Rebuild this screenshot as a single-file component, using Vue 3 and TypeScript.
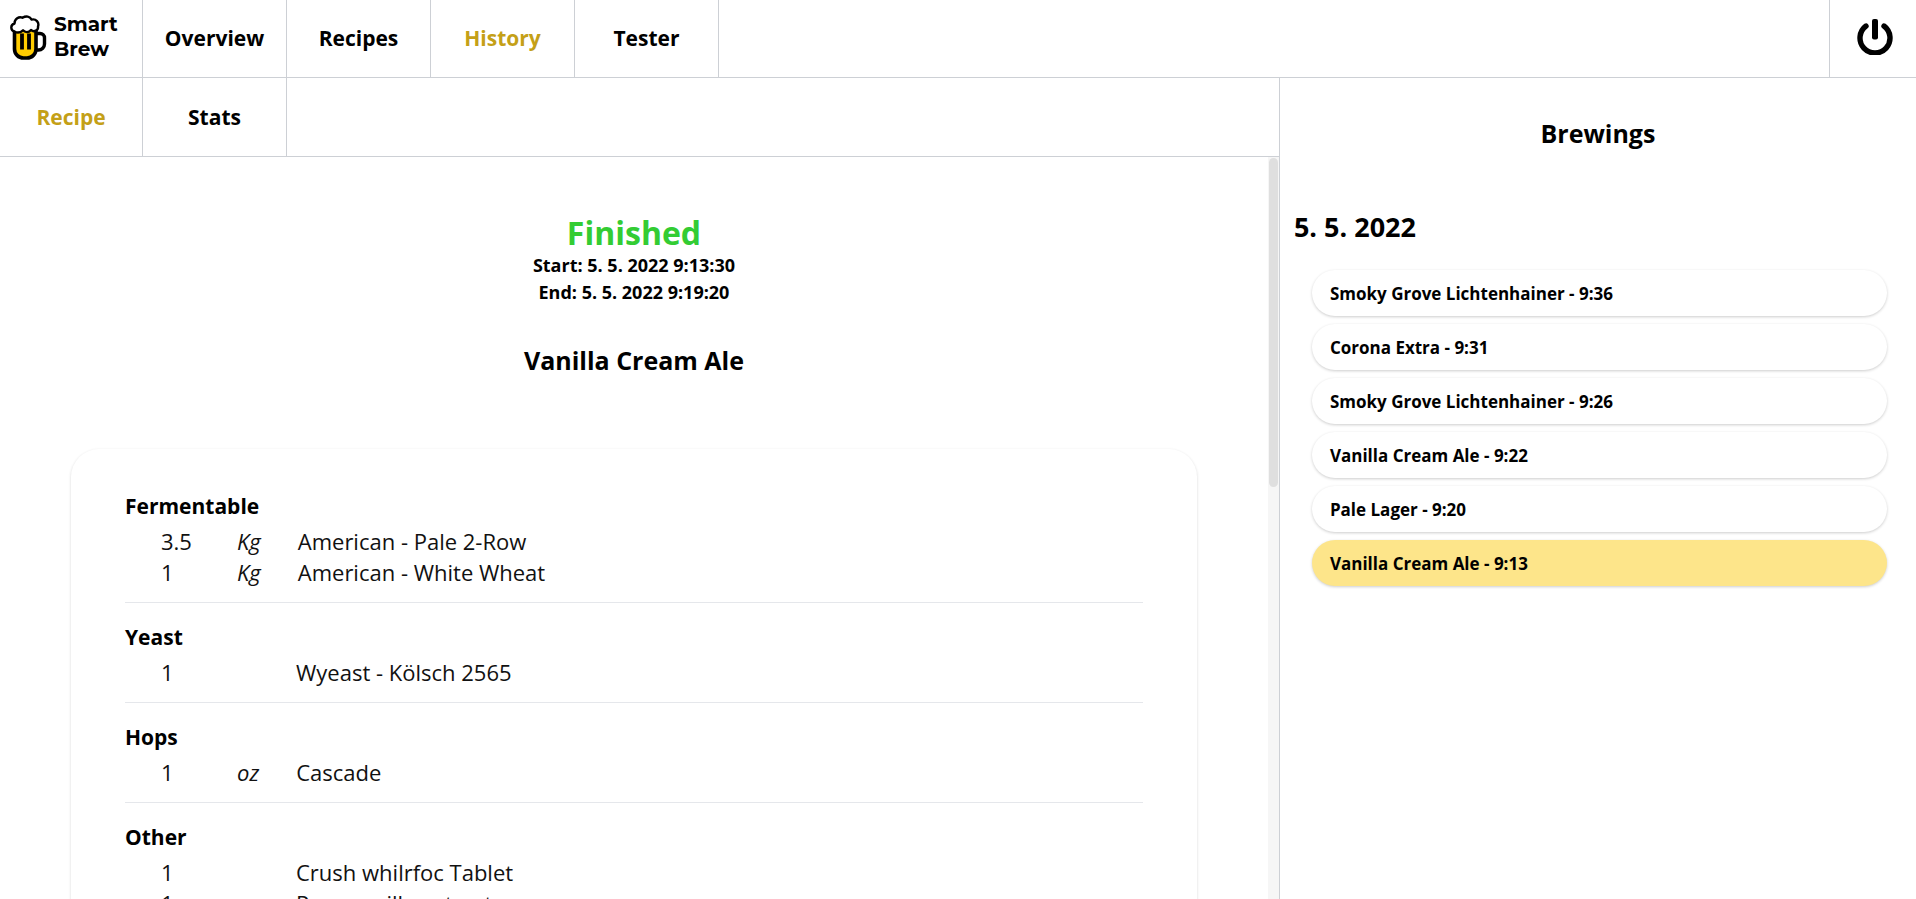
<script setup lang="ts">
import { computed, onMounted, ref } from 'vue'

interface Ingredient { amount: string; unit: string; name: string }
interface Section { title: string; items: Ingredient[] }

const tabs = ['Overview', 'Recipes', 'History', 'Tester']
const activeTab = ref('History')
const views = ['Recipe', 'Stats']
const activeView = ref('Recipe')

const sections: Section[] = [
  {
    title: 'Fermentable',
    items: [
      { amount: '3.5', unit: 'Kg', name: 'American - Pale 2-Row' },
      { amount: '1', unit: 'Kg', name: 'American - White Wheat' },
    ],
  },
  { title: 'Yeast', items: [{ amount: '1', unit: '', name: 'Wyeast - Kölsch 2565' }] },
  { title: 'Hops', items: [{ amount: '1', unit: 'oz', name: 'Cascade' }] },
  {
    title: 'Other',
    items: [
      { amount: '1', unit: '', name: 'Crush whilrfoc Tablet' },
      { amount: '1', unit: '', name: 'Pure vanilla extract' },
    ],
  },
]

const brewings = [
  'Smoky Grove Lichtenhainer - 9:36',
  'Corona Extra - 9:31',
  'Smoky Grove Lichtenhainer - 9:26',
  'Vanilla Cream Ale - 9:22',
  'Pale Lager - 9:20',
  'Vanilla Cream Ale - 9:13',
]
const selected = ref(5)

// Custom scrollbar: thumb size and offset follow the scroll container.
const scroller = ref<HTMLElement | null>(null)
const viewHeight = ref(1)
const fullHeight = ref(1)
const scrollTop = ref(0)
function measure(): void {
  const el = scroller.value
  if (!el) return
  viewHeight.value = el.clientHeight
  fullHeight.value = el.scrollHeight
  scrollTop.value = el.scrollTop
}
onMounted(() => {
  measure()
  window.addEventListener('resize', measure)
})
const thumbStyle = computed(() => ({
  height: `${(viewHeight.value / fullHeight.value) * 100}%`,
  marginTop: `${(scrollTop.value / fullHeight.value) * viewHeight.value}px`,
}))
</script>

<template>
  <div class="app">
    <header class="topbar">
      <a class="logo" href="#">
        <svg class="mug" viewBox="0 0 37 45" aria-hidden="true">
          <path d="M26 18.500h4a4.500 4.500 0 0 1 4.500 4.500v6a6 6 0 0 1-6 6h-3" fill="none" stroke="#000" stroke-width="3.400" />
          <path d="M4.500 14v20a9 9 0 0 0 9 9h3.500a9 9 0 0 0 9-9V14z" fill="#fc0" stroke="#000" stroke-width="3.600" />
          <path d="M12 18.500v16M19 18.500v16" stroke="#000" stroke-width="3.800" />
          <path d="M4.500 16.500C.5 15.500 0 10 4.500 8.500 4.500 4 9 1 12.500 2.800 16 .6 20 1.200 21.500 4.600 26 3.500 29.500 7.500 28 11.500 28.500 15.500 24 17.500 21 15 18.500 18 15 17.500 13 15.300 10 18 7 18 4.500 16.500z" fill="#fff" stroke="#000" stroke-width="2.400" stroke-linejoin="round" />
        </svg>
        <span>Smart<br />Brew</span>
      </a>
      <nav class="tabs">
        <button v-for="t in tabs" :key="t" class="tab" :class="{ active: t === activeTab }" @click="activeTab = t">{{ t }}</button>
      </nav>
      <button class="power" aria-label="Power">
        <svg viewBox="0 0 36 36" aria-hidden="true">
          <path d="M9 7a15 15 0 1 0 18 0" fill="none" stroke="#000" stroke-width="5.400" stroke-linecap="round" />
          <rect x="15" y="0" width="6" height="20.500" rx="2" />
        </svg>
      </button>
    </header>

    <div class="body">
      <main class="main">
        <nav class="tabs sub">
          <button v-for="v in views" :key="v" class="tab" :class="{ active: v === activeView }" @click="activeView = v">{{ v }}</button>
        </nav>
        <div class="pane">
          <div ref="scroller" class="scroll" @scroll="measure">
            <div class="content">
              <div class="status">Finished</div>
              <div class="time">Start: 5. 5. 2022 9:13:30</div>
              <div class="time">End: 5. 5. 2022 9:19:20</div>
              <h1>Vanilla Cream Ale</h1>
              <div class="card">
                <section v-for="s in sections" :key="s.title">
                  <h2>{{ s.title }}</h2>
                  <table>
                    <tbody>
                      <tr v-for="i in s.items" :key="i.name">
                        <td class="amount">{{ i.amount }}</td>
                        <td class="unit">{{ i.unit }}</td>
                        <td>{{ i.name }}</td>
                      </tr>
                    </tbody>
                  </table>
                </section>
              </div>
            </div>
          </div>
          <div class="track" aria-hidden="true">
            <div class="thumb" :style="thumbStyle"></div>
          </div>
        </div>
      </main>
      <aside class="side">
        <h1>Brewings</h1>
        <h2>5. 5. 2022</h2>
        <ul>
          <li v-for="(b, i) in brewings" :key="b">
            <button class="brew" :class="{ selected: i === selected }" @click="selected = i">{{ b }}</button>
          </li>
        </ul>
      </aside>
    </div>
  </div>
</template>

<style>
body { margin: 0; background: #fff; }
</style>

<style scoped>
.app {
  --line: #cdd0d5;
  height: 100vh;
  display: flex;
  flex-direction: column;
  font-family: "Segoe UI", "Open Sans", "Noto Sans", sans-serif;
  color: #000;
}
* { box-sizing: border-box; }
button { font: inherit; color: inherit; background: none; border: 0; padding: 0; cursor: pointer; }
h1, h2, ul { margin: 0; padding: 0; }
.topbar { display: flex; flex: none; height: 78px; border-bottom: 1px solid var(--line); }
.logo {
  width: 143px;
  border-right: 1px solid var(--line);
  display: flex;
  align-items: center;
  gap: 7px;
  padding: 0 0 3px 10px;
  font: 700 20px/25px Montserrat, Inter, sans-serif;
  color: #000;
  text-decoration: none;
}
.mug { width: 37px; height: 45px; }
.tabs { display: flex; flex: 1; }
.tab { width: 144px; padding-bottom: 1px; border-right: 1px solid var(--line); font-size: 21px; font-weight: 700; }
.tab.active { color: #c4a017; }
.power {
  width: 87px;
  padding: 0 0 3px 4px;
  border-left: 1px solid var(--line);
  display: flex;
  align-items: center;
  justify-content: center;
}
.power svg { width: 36px; height: 36px; }
.body { display: grid; grid-template-columns: 66.75% minmax(0, 1fr); flex: 1; min-height: 0; }
.main { display: flex; flex-direction: column; min-width: 0; min-height: 0; }
.sub { flex: none; height: 79px; border-bottom: 1px solid var(--line); }
.sub .tab:first-child { width: 143px; }
.pane { display: flex; flex: 1; min-height: 0; }
.scroll { flex: 1; min-width: 0; overflow-y: auto; scrollbar-width: none; }
.track { width: 11px; padding: 1px 1px 0; background: #f6f6f6; }
.thumb { background: #dfdfdf; border-radius: 5px; }
.content { min-height: 1673px; padding: 56px 71px; display: flex; flex-direction: column; align-items: center; }
.status { font-size: 32px; line-height: 39px; font-weight: 700; color: #3c3; }
.time { font-size: 18px; line-height: 27px; font-weight: 700; }
h1, .side h2 { font-size: 25px; line-height: 36px; font-weight: 700; }
.content h1 { margin-top: 36px; }
.card {
  align-self: stretch;
  margin-top: 71px;
  padding: 39px 54px;
  border-radius: 28px;
  box-shadow: 0 1px 3px rgba(0, 0, 0, 0.16);
}
section { padding-bottom: 14px; border-bottom: 1px solid #e5e7eb; margin-bottom: 16px; }
section:last-child { border-bottom: 0; }
.card h2 { font-size: 21px; line-height: 36px; font-weight: 700; margin-bottom: 2px; }
table { border-collapse: collapse; margin-left: 36px; font-size: 22px; line-height: 31px; color: #111; }
td { padding: 0; }
.amount { min-width: 76px; }
.unit { min-width: 59px; padding-right: 37px; font-style: italic; }
.side { border-left: 1px solid var(--line); padding-top: 37px; }
.side h1 { text-align: center; }
.side h2 { margin: 58px 0 0 14px; font-size: 27px; }
ul { list-style: none; margin: 25px 29px 0 32px; display: flex; flex-direction: column; gap: 8px; }
.brew {
  display: block;
  width: 100%;
  height: 46px;
  padding: 0 18px;
  text-align: left;
  border-radius: 23px;
  font-size: 17px;
  font-weight: 700;
  box-shadow: 0 1px 3px rgba(0, 0, 0, 0.2);
}
.selected { background: #fde58a; }
</style>
